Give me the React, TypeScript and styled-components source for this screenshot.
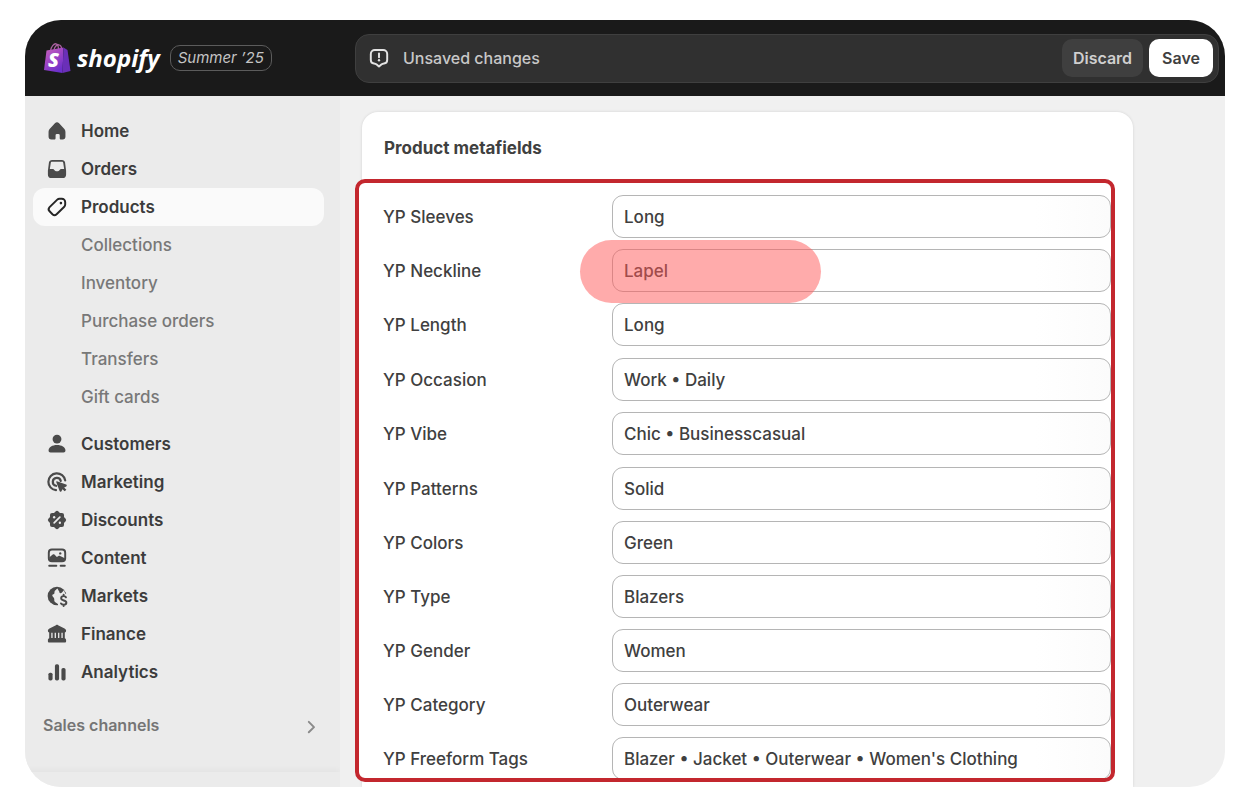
import React from "react";
import styled, { createGlobalStyle, css } from "styled-components";

const GlobalStyle = createGlobalStyle`
  *, *::before, *::after { box-sizing: border-box; }
  body {
    margin: 0;
    background: #fff;
    color: #404040;
    font-family: Inter, "Liberation Sans", sans-serif;
    font-size: 17px;
    font-weight: 500;
    line-height: 24px;
  }
  a { color: inherit; text-decoration: none; }
  button, input { font: inherit; color: inherit; }
`;

const Page = styled.div`
  height: 100vh;
  padding: 20px 25px;
`;

const Frame = styled.div`
  display: flex;
  flex-direction: column;
  height: 100%;
  overflow: hidden;
  border-radius: 36px;
  background: #f0f0f0;
`;

const TopBar = styled.header`
  display: flex;
  flex: none;
  align-items: center;
  height: 76px;
  padding-right: 6px;
  background: #1a1a1a;
`;

const Brand = styled.a`
  display: flex;
  align-items: center;
  width: 330px;
  padding-left: 18px;
`;

const Wordmark = styled.span`
  margin-left: 6px;
  color: #fff;
  font-family: "Open Sans", "Noto Sans", sans-serif;
  font-size: 24px;
  font-style: italic;
  font-weight: 700;
`;

const Edition = styled.span`
  margin-left: 10px;
  padding: 0 7px;
  border: 1px solid #5c5c5c;
  border-radius: 10px;
  color: #c4c4c4;
  font-size: 15px;
  font-style: italic;
  font-weight: 400;
`;

const SaveBar = styled.div`
  display: flex;
  flex: 1;
  align-items: center;
  gap: 6px;
  height: 49px;
  padding: 0 5px 0 10px;
  border: 1px solid #3f3f3f;
  border-radius: 14px;
  background: #303030;
  color: #c8c8c8;
  font-size: 16px;
`;

const SaveBarText = styled.span`
  flex: 1;
  margin-left: 5px;
`;

const Button = styled.button<{ $primary?: boolean }>`
  height: 38px;
  padding: 0 ${(p) => (p.$primary ? 13 : 11)}px;
  border: 0;
  border-radius: 10px;
  background: ${(p) => (p.$primary ? "#fff" : "#3f3f3f")};
  color: ${(p) => (p.$primary ? "#404040" : "#cfcfcf")};
  font-weight: 600;
`;

const Body = styled.div`
  display: flex;
  flex: 1;
  min-height: 0;
`;

const Sidebar = styled.nav`
  display: flex;
  flex: none;
  flex-direction: column;
  width: 315px;
  padding: 16px 16px 0 8px;
  overflow: hidden;
  background: #ebebeb;
`;

const NavList = styled.ul`
  margin: 0 0 9px;
  padding: 0;
  list-style: none;
`;

const NavLink = styled.a<{ $active?: boolean; $sub?: boolean }>`
  display: flex;
  align-items: center;
  gap: 11px;
  height: 38px;
  padding-left: ${(p) => (p.$sub ? 48 : 11)}px;
  border-radius: 12px;
  color: ${(p) => (p.$sub ? "#787878" : "#3c3c3c")};
  font-weight: ${(p) => (p.$sub ? 500 : 600)};
  ${(p) => p.$active && css`background: #fafafa;`}
`;

const SectionLink = styled.a`
  display: flex;
  align-items: center;
  justify-content: space-between;
  margin-top: 12px;
  padding-left: 10px;
  color: #757575;
  font-size: 16px;
  font-weight: 600;
`;

const SidebarFoot = styled.div`
  height: 15px;
  margin: auto -16px 0 -8px;
  box-shadow: 0 -2px 6px rgba(0, 0, 0, 0.04);
`;

const Main = styled.main`
  display: flex;
  flex: 1;
  min-width: 0;
  padding: 16px 92px 0 22px;
`;

const Card = styled.section`
  display: flex;
  flex: 1;
  flex-direction: column;
  min-width: 0;
  border-radius: 16px 16px 0 0;
  background: #fff;
  box-shadow: 0 0 3px rgba(0, 0, 0, 0.12);
`;

const CardTitle = styled.h2`
  margin: 0;
  padding: 24px 22px 19px;
  font-size: 17px;
  font-weight: 650;
  line-height: 24px;
`;

const Fields = styled.div`
  display: flex;
  flex: 1;
  flex-direction: column;
  gap: 12px;
  min-height: 0;
  margin: 0 18px 5px -7px;
  padding: 12px 0 0 24px;
  overflow: hidden;
  border: 4px solid #c3272e;
  border-radius: 10px;
  background: #fff;
`;

const FieldGroup = styled.div`
  display: flex;
  flex: none;
  flex-direction: column;
  gap: 11px;
`;

const Field = styled.div`
  display: grid;
  grid-template-columns: 229px 1fr;
  align-items: center;
`;

const FieldControl = styled.div<{ $marked?: boolean }>`
  position: relative;
  ${(p) =>
    p.$marked &&
    css`
      z-index: 1;
      &::after {
        content: "";
        position: absolute;
        top: -9px;
        left: -32px;
        width: 241px;
        height: 63px;
        border-radius: 32px;
        background: rgba(255, 88, 88, 0.5);
        pointer-events: none;
      }
    `}
`;

const TextInput = styled.input`
  display: block;
  width: 100%;
  height: 43px;
  padding: 0 11px;
  border: 1px solid #b5b5b5;
  border-radius: 11px;
  background: linear-gradient(to right, #fff 85%, #fbfbfb);
  outline: none;
`;

const Glyph = styled.svg<{ $color: string }>`
  flex: none;
  width: 26px;
  height: 26px;
  color: ${(p) => p.$color};
`;

const stroke = {
  fill: "none",
  stroke: "currentColor",
  strokeWidth: 1.5,
  strokeLinecap: "round" as const,
  strokeLinejoin: "round" as const,
};

const icons: Record<string, React.ReactNode> = {
  home: (
    <path
      fill="currentColor"
      d="M8.4 4.1a2.2 2.2 0 0 1 3.2 0l3.9 4.1c.7.7 1 1.600 1 2.500v3.600a2.200 2.200 0 0 1-2.200 2.200h-1.200c-.6 0-1-.4-1-1v-2.200a1 1 0 0 0-1-1h-1.200a1 1 0 0 0-1 1v2.200c0 .6-.4 1-1 1H5.700a2.200 2.200 0 0 1-2.200-2.200v-3.600c0-.9.3-1.800 1-2.500z"
    />
  ),
  orders: (
    <path
      fill="currentColor"
      fillRule="evenodd"
      d="M6.200 3h7.600c1.300 0 2.200.8 2.400 2l.7 5.500c.1.400.1.800.1 1.200v2.500a2.800 2.800 0 0 1-2.800 2.800H5.800A2.800 2.800 0 0 1 3 14.200v-2.500c0-.4 0-.8.1-1.200L3.800 5c.2-1.200 1.100-2 2.400-2zM6.300 4.400c-.7 0-1 .3-1.100.9l-.7 4.700h2.300c.5 0 .9.300 1.100.700l.4.500c.2.400.6.600 1 .6h1.400c.4 0 .8-.2 1-.6l.4-.5c.2-.4.6-.7 1.100-.7h2.300l-.7-4.700c-.1-.6-.4-.9-1.100-.9z"
    />
  ),
  products: (
    <>
      <path
        {...stroke}
        d="M10.200 4.300 4.300 10.100a2.300 2.300 0 0 0 0 3.200l2.200 2.300a2.300 2.300 0 0 0 3.200 0l5.900-5.800c.5-.5.700-1.100.7-1.700V6.200a2.600 2.600 0 0 0-2.600-2.600h-1.800c-.6 0-1.200.2-1.700.7z"
      />
      <circle cx="13" cy="7" r="1" fill="currentColor" />
    </>
  ),
  customers: (
    <g fill="currentColor">
      <circle cx="10" cy="6.200" r="3.400" />
      <path d="M3.500 15c0-2.600 3-4.200 6.500-4.200s6.500 1.600 6.500 4.200c0 1-.6 1.500-1.500 1.500H5c-.9 0-1.500-.5-1.500-1.500z" />
    </g>
  ),
  marketing: (
    <>
      <g {...stroke} strokeWidth={1.700}>
        <path d="M16.300 8.800A6.500 6.500 0 1 0 9.200 16.300" />
        <path d="M12.900 9.200A3.100 3.100 0 1 0 9.300 12.900" />
      </g>
      <path
        fill="currentColor"
        d="M9.900 9.500 17 12c.7.200.7 1.100.1 1.400l-1.600.8 1.700 1.700-1.300 1.300-1.700-1.700-.8 1.600c-.3.600-1.200.6-1.400-.1L9.400 10c-.1-.3.200-.6.500-.5z"
      />
    </>
  ),
  discounts: (
    <>
      <g fill="currentColor">
        <rect x="4.600" y="4.600" width="10.800" height="10.800" rx="1.600" />
        <rect x="4.600" y="4.600" width="10.800" height="10.800" rx="1.600" transform="rotate(45 10 10)" />
      </g>
      <path {...stroke} stroke="#ebebeb" strokeWidth={1.300} d="m7.800 12.200 4.400-4.400" />
      <circle cx="7.800" cy="7.900" r=".9" fill="#ebebeb" />
      <circle cx="12.200" cy="12.100" r=".9" fill="#ebebeb" />
    </>
  ),
  content: (
    <>
      <rect {...stroke} x="3.700" y="3.500" width="12.600" height="9" rx="2.400" />
      <path
        fill="currentColor"
        d="M4 9.700 6.700 7.400c.5-.4 1.100-.3 1.500.1l1.700 1.800 1.200-.8c.4-.3.900-.3 1.300 0l3.600 1.700v1.800l-1.500.9H5z"
      />
      <circle cx="12.500" cy="6.500" r=".9" fill="currentColor" />
      <path {...stroke} d="M4 16h5.500M12.800 16H16" />
    </>
  ),
  markets: (
    <>
      <circle cx="10" cy="10" r="7.200" fill="currentColor" />
      <path
        fill="#ebebeb"
        d="M10.300 4.300 8.600 5.800c-.3.300-.4.600-.5 1l-.1 1c-.1.400-.4.700-.8.800-.8.200-1 1-.6 1.600l.9 1.200c.3.300.4.700.4 1.100v1c0 .6.300 1.100.8 1.400l2 1.300.6 3h7.700V8.200h-2.600l-1.100-2.600-1.500 1.700c-.3.300-.7.500-1.100.5-.6 0-1-.5-.9-1.100z"
      />
      <path
        {...stroke}
        strokeWidth={1.500}
        d="M16.900 11c-.3-.6-1-.9-1.800-.9-1.100 0-1.900.7-1.900 1.600 0 2.200 4 1.300 4 3.400 0 1-.9 1.600-2.100 1.600-.9 0-1.600-.3-2-1M15.100 9v1M15.100 16.800v.9"
      />
    </>
  ),
  finance: (
    <path
      fill="currentColor"
      fillRule="evenodd"
      d="M9.200 3.200c.5-.3 1.100-.3 1.600 0l5 2.500c.7.400 1.200 1 1.200 1.800 0 .8-.5 1.300-1 1.400v4.300c.6.200 1 .8 1 1.500v.8c0 .6-.4 1-1 1H4c-.6 0-1-.4-1-1v-.8c0-.7.400-1.300 1-1.500V8.900c-.5-.1-1-.6-1-1.400 0-.8.5-1.400 1.200-1.800zM5.600 9v4.100h1V9zM8.200 9v4.100h1V9zm2.600 0v4.100h1V9zm2.600 0v4.100h1V9z"
    />
  ),
  analytics: (
    <g fill="currentColor">
      <rect x="3.400" y="10.500" width="3.200" height="6" rx="1.300" />
      <rect x="8.400" y="4" width="3.200" height="12.500" rx="1.300" />
      <rect x="13.400" y="7" width="3.200" height="9.500" rx="1.300" />
    </g>
  ),
  alert: (
    <>
      <path
        {...stroke}
        d="M6.800 3.800h6.400a3.100 3.100 0 0 1 3.100 3.100v4.600a2.700 2.700 0 0 1-2.400 2.700c-.8.100-1.500.3-2.100.8L10 16.600l-1.800-1.600c-.6-.5-1.300-.7-2.100-.8a2.700 2.700 0 0 1-2.400-2.700V6.900a3.100 3.100 0 0 1 3.100-3.100z"
      />
      <path {...stroke} d="M10 6.500v3" />
      <circle cx="10" cy="11.700" r=".9" fill="currentColor" />
    </>
  ),
  chevron: <path {...stroke} d="m8.300 7.600 4 4-4 4" />,
};

function Icon({ name, color = "#4a4a4a" }: { name: string; color?: string }) {
  return (
    <Glyph viewBox="0 0 20 20" $color={color} aria-hidden="true">
      {icons[name]}
    </Glyph>
  );
}

function BagLogo() {
  return (
    <svg width="28" height="32" viewBox="0 0 28 32" aria-hidden="true">
      <defs>
        <linearGradient id="bag" x1="0" y1="0" x2="0.6" y2="1">
          <stop offset="0" stopColor="#c965b8" />
          <stop offset="0.5" stopColor="#a146c4" />
          <stop offset="1" stopColor="#6d30cc" />
        </linearGradient>
      </defs>
      <path
        d="M7.500 9C8 4.500 11 1.500 13 1.800c2 .3 2.500 3 2.500 6M11 8c.5-3.500 3-5.500 4.800-5.200C17.500 3 18.500 5 18.500 7"
        fill="none"
        stroke="#a9609f"
        strokeWidth="1.300"
      />
      <path d="M3.500 8.500 20.500 5.500 19.500 31 1 28z" fill="url(#bag)" />
      <path d="M20.500 5.500 24.500 8 27.500 29 19.500 31z" fill="#6a2fb8" />
      <text x="5" y="25" fill="#fff" fontFamily="Open Sans, sans-serif" fontSize="20" fontStyle="italic" fontWeight="800">
        S
      </text>
    </svg>
  );
}

type NavItem = { label: string; icon?: string; active?: boolean };

const primaryNav: NavItem[] = [
  { label: "Home", icon: "home" },
  { label: "Orders", icon: "orders" },
  { label: "Products", icon: "products", active: true },
  { label: "Collections" },
  { label: "Inventory" },
  { label: "Purchase orders" },
  { label: "Transfers" },
  { label: "Gift cards" },
];

const secondaryNav: NavItem[] = [
  { label: "Customers", icon: "customers" },
  { label: "Marketing", icon: "marketing" },
  { label: "Discounts", icon: "discounts" },
  { label: "Content", icon: "content" },
  { label: "Markets", icon: "markets" },
  { label: "Finance", icon: "finance" },
  { label: "Analytics", icon: "analytics" },
];

type Metafield = { label: string; value: string; marked?: boolean };

const metafields: Metafield[][] = [
  [
    { label: "YP Sleeves", value: "Long" },
    { label: "YP Neckline", value: "Lapel", marked: true },
    { label: "YP Length", value: "Long" },
  ],
  [
    { label: "YP Occasion", value: "Work • Daily" },
    { label: "YP Vibe", value: "Chic • Businesscasual" },
  ],
  [
    { label: "YP Patterns", value: "Solid" },
    { label: "YP Colors", value: "Green" },
    { label: "YP Type", value: "Blazers" },
    { label: "YP Gender", value: "Women" },
    { label: "YP Category", value: "Outerwear" },
    { label: "YP Freeform Tags", value: "Blazer • Jacket • Outerwear • Women's Clothing" },
  ],
];

function NavSection({ items }: { items: NavItem[] }) {
  return (
    <NavList>
      {items.map((item) => (
        <li key={item.label}>
          <NavLink href="#" $active={item.active} $sub={!item.icon} aria-current={item.active ? "page" : undefined}>
            {item.icon && <Icon name={item.icon} color={item.active ? "#262626" : undefined} />}
            {item.label}
          </NavLink>
        </li>
      ))}
    </NavList>
  );
}

function MetafieldRow({ label, value, marked }: Metafield) {
  const id = label.toLowerCase().replace(/ /g, "-");
  return (
    <Field>
      <label htmlFor={id}>{label}</label>
      <FieldControl $marked={marked}>
        <TextInput id={id} type="text" defaultValue={value} />
      </FieldControl>
    </Field>
  );
}

export default function App() {
  return (
    <Page>
      <GlobalStyle />
      <Frame>
        <TopBar>
          <Brand href="#">
            <BagLogo />
            <Wordmark>shopify</Wordmark>
            <Edition>Summer ’25</Edition>
          </Brand>
          <SaveBar>
            <Icon name="alert" color="#e3e3e3" />
            <SaveBarText>Unsaved changes</SaveBarText>
            <Button type="button">Discard</Button>
            <Button type="button" $primary>
              Save
            </Button>
          </SaveBar>
        </TopBar>
        <Body>
          <Sidebar aria-label="Main">
            <NavSection items={primaryNav} />
            <NavSection items={secondaryNav} />
            <SectionLink href="#">
              Sales channels
              <Icon name="chevron" color="#8a8a8a" />
            </SectionLink>
            <SidebarFoot />
          </Sidebar>
          <Main>
            <Card>
              <CardTitle>Product metafields</CardTitle>
              <Fields>
                {metafields.map((group) => (
                  <FieldGroup key={group[0].label}>
                    {group.map((field) => (
                      <MetafieldRow key={field.label} {...field} />
                    ))}
                  </FieldGroup>
                ))}
              </Fields>
            </Card>
          </Main>
        </Body>
      </Frame>
    </Page>
  );
}
